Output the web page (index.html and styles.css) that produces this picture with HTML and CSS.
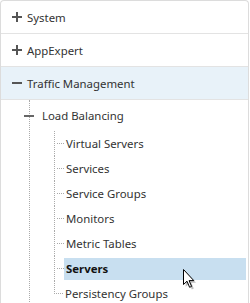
FILE: index.html
```html
<!DOCTYPE html>
<html lang="en">
<head>
    <meta charset="UTF-8">
    <title>Navigation</title>
    <link rel="stylesheet" href="styles.css">
</head>
<body>
    <div class="panel">
        <div class="section"><span class="toggle plus"></span>System</div>
        <div class="section"><span class="toggle plus"></span>AppExpert</div>
        <div class="section open"><span class="toggle"></span>Traffic Management</div>
        <div class="tree">
            <div class="node"><span class="toggle small"></span>Load Balancing</div>
            <ul class="children">
                <li><span class="label">Virtual Servers</span></li>
                <li><span class="label">Services</span></li>
                <li><span class="label">Service Groups</span></li>
                <li><span class="label">Monitors</span></li>
                <li><span class="label">Metric Tables</span></li>
                <li class="selected"><span class="label">Servers</span>
                    <svg class="cursor" width="14" height="22" viewBox="0 0 14 22">
                        <path d="M2.5 2.5 L2.5 17.5 L6 14.2 L8.6 20.3 L10.6 19.4 L8.1 13.6 L12.8 13.6 Z" fill="#000" opacity="0.25" transform="translate(1.2 1.2)"/>
                        <path d="M1.5 1.5 L1.5 16.5 L5 13.2 L7.6 19.3 L9.6 18.4 L7.1 12.6 L11.8 12.6 Z" fill="#fff" stroke="#000" stroke-width="1" stroke-linejoin="miter"/>
                    </svg>
                </li>
                <li class="last"><span class="label">Persistency Groups</span></li>
            </ul>
        </div>
    </div>
</body>
</html>
```

FILE: styles.css
```css
body {
    margin: 0;
    background-color: #fff;
    font-family: "Noto Sans", "Open Sans", sans-serif;
    font-size: 11.4px;
    color: #333;
    overflow: hidden;
}
.panel {
    width: 247px;
    height: 302px;
    border: 1px solid #dcdcdc;
    border-bottom: none;
    border-radius: 4px 4px 0 0;
    overflow: hidden;
}
.section {
    display: flex;
    align-items: center;
    height: 32px;
    padding-left: 11px;
    border-bottom: 1px solid #e3e3e3;
}
.section.open {
    background-color: #e8f2f9;
}
.toggle {
    position: relative;
    width: 10px;
    height: 10px;
    margin-right: 5px;
    flex-shrink: 0;
}
.toggle::before,
.plus::after {
    content: "";
    position: absolute;
    background-color: #555;
}
.toggle::before {
    left: 0;
    top: 4px;
    width: 10px;
    height: 2px;
}
.plus::after {
    left: 4px;
    top: 0;
    width: 2px;
    height: 10px;
}
.tree {
    margin-left: 28px;
    border-left: 1px dotted #aaa;
    height: 210px;
}
.node {
    display: flex;
    align-items: center;
    height: 31px;
    margin-left: -6px;
}
.node .toggle {
    margin-right: 8px;
}
.node .toggle::before {
    background-color: #666;
}
.children {
    list-style: none;
    margin: 0 0 0 24px;
    padding: 0;
}
.children li {
    position: relative;
    display: flex;
    align-items: center;
    height: 25px;
    border-left: 1px dotted #aaa;
}
.children li.last {
    border-left: none;
}
.children li.last::after {
    content: "";
    position: absolute;
    left: 0;
    top: 0;
    height: 13px;
    border-left: 1px dotted #aaa;
}
.children li::before {
    content: "";
    width: 7px;
    margin-left: 2px;
    border-top: 1px dotted #aaa;
}
.label {
    flex: 1;
    display: flex;
    align-items: center;
    height: 22px;
    padding-left: 2px;
    margin-right: 2px;
}
.selected .label {
    background-color: #c8dff0;
    font-weight: bold;
    color: #111;
}
.cursor {
    position: absolute;
    left: 127px;
    top: 12px;
}
```
